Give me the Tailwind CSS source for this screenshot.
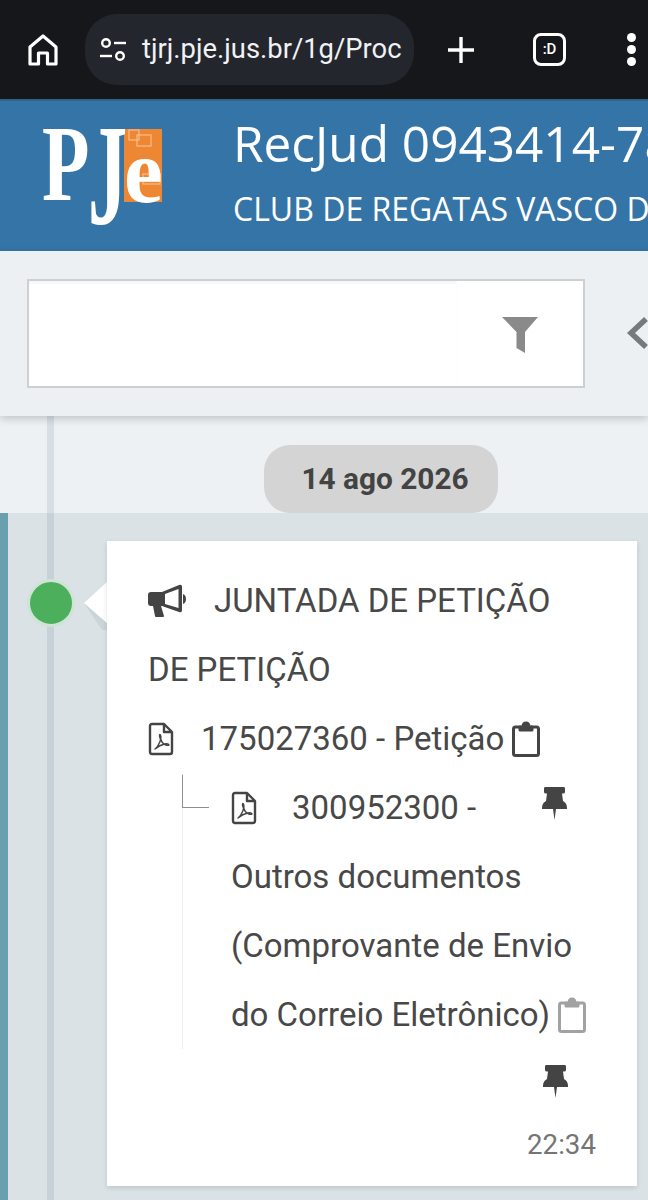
<!DOCTYPE html>
<html lang="pt-BR">
  <head>
    <meta charset="UTF-8" />
    <meta name="viewport" content="width=device-width, initial-scale=1.0" />
    <title>PJe</title>
    <script src="https://cdn.jsdelivr.net/npm/@tailwindcss/browser@4"></script>
  </head>
  <body class="w-[648px] h-[1200px] overflow-hidden bg-[#edf1f4] font-['Roboto',sans-serif]">
    <!-- Barra do navegador -->
    <div class="h-[99px] bg-[#16171b] flex items-center">
      <svg class="ml-[28px] w-[30px] h-[32px] shrink-0" viewBox="0 0 30 32" fill="none" stroke="#fff" stroke-width="3.200" stroke-linejoin="round">
        <path d="M15 2 L28 13 V30 H19.500 V19 H10.500 V30 H2 V13 Z" />
      </svg>
      <div class="ml-[27px] w-[329px] h-[71px] rounded-[32px] bg-[#23262d] flex items-center shrink-0">
        <svg class="ml-[14px] w-[28px] h-[24px] shrink-0" viewBox="0 0 28 24" fill="none" stroke="#fff" stroke-width="2.400">
          <circle cx="7" cy="5" r="3.800" />
          <path d="M15 5 H27" />
          <path d="M1 18 H13" />
          <circle cx="21" cy="18" r="3.800" />
        </svg>
        <span class="ml-[15px] text-[27.400px] text-[#f1f2f4] whitespace-nowrap">tjrj.pje.jus.br/1g/Proc</span>
      </div>
      <svg class="ml-[32px] w-[30px] h-[30px] shrink-0" viewBox="0 0 30 30" stroke="#fff" stroke-width="3.400">
        <path d="M15 2 V28 M2 15 H28" />
      </svg>
      <div class="ml-[57px] w-[33px] h-[33px] border-[3px] border-white rounded-[8px] flex items-center justify-center text-white text-[15px] font-medium shrink-0">:D</div>
      <div class="ml-[61px] flex flex-col gap-[3px] shrink-0">
        <span class="w-[9px] h-[9px] rounded-full bg-white"></span>
        <span class="w-[9px] h-[9px] rounded-full bg-white"></span>
        <span class="w-[9px] h-[9px] rounded-full bg-white"></span>
      </div>
    </div>

    <!-- Cabeçalho azul -->
    <div class="h-[152px] bg-[#3574a7] border-t-2 border-[#2f6489] flex items-start overflow-hidden">
      <svg class="mt-[24px] ml-[40px] w-[126px] h-[102px] shrink-0" viewBox="0 0 126 102">
        <rect x="84" y="4" width="38" height="73" fill="#ee8733" />
        <g fill="none" stroke="#f8bd88" stroke-width="1.200">
          <rect x="89" y="5" width="10" height="10" />
          <rect x="97" y="10" width="14" height="11" />
          <rect x="103" y="49" width="17" height="10" />
        </g>
        <text transform="translate(2 75) scale(0.72 1)" font-family="Liberation Serif" font-weight="700" font-size="108" fill="#fff">P</text>
        <text transform="translate(48 99) scale(0.54 1)" font-family="Liberation Serif" font-weight="700" font-size="145" fill="#fff">J</text>
        <text transform="translate(84 77) scale(0.95 1)" font-family="Liberation Serif" font-weight="700" font-size="92" fill="#fff">e</text>
      </svg>
      <div class="ml-[67px] min-w-0 whitespace-nowrap text-white font-['Open_Sans',sans-serif]">
        <div class="mt-[11px] text-[49.500px] leading-[62px]">RecJud 0943414-78</div>
        <div class="mt-[14px] text-[32px] leading-[42px]">CLUB DE REGATAS VASCO DA GAMA</div>
      </div>
    </div>

    <!-- Filtro -->
    <div class="relative z-10 h-[165px] bg-[#ecf0f3] shadow-[0_3px_8px_rgba(0,0,0,0.18)] flex items-start overflow-hidden">
      <div class="mt-[28px] ml-[27px] w-[558px] h-[109px] border-2 border-[#cdd0d2] bg-white flex items-center shrink-0">
        <div class="w-[428px] h-full shadow-[inset_0_3px_2px_rgba(0,0,0,0.03)]"></div>
        <svg class="ml-[45px] mt-[3px] w-[36px] h-[36px]" viewBox="0 0 36 36">
          <path d="M0 0 H36 L23 15 V36 L14.500 31 V15 Z" fill="#8a8a8a" />
        </svg>
      </div>
      <svg class="ml-[41px] mt-[66px] w-[24px] h-[32px] shrink-0" viewBox="0 0 24 32" fill="none" stroke="#767a7c" stroke-width="5.500">
        <path d="M20 2 L5 16 L20 30" />
      </svg>
    </div>

    <!-- Linha do tempo -->
    <div class="relative h-[784px]">
      <div class="absolute left-[47px] top-0 bottom-0 w-[7px] bg-[#5b7a8a]/15 z-[1]"></div>
      <div class="h-[97px] flex justify-center items-start pl-[114px]">
        <div class="mt-[29px] w-[234px] h-[68px] rounded-[26px] bg-[#d4d4d4] flex items-center justify-center pl-[8px] text-[29.800px] font-bold text-[#434343]">14 ago 2026</div>
      </div>
      <div class="relative h-[687px] bg-[#dae2e6] border-l-8 border-[#6a9fae] pt-[28px] pl-[99px] pr-[11px]">
        <!-- Ponto e seta -->
        <div class="absolute left-[19px] top-[66px] w-[48px] h-[48px] rounded-full bg-[#4caf5c] border-[3px] border-[#cfe3d6] z-[2]"></div>
        <svg class="absolute left-[76px] top-[69px] w-[23px] h-[48px]" viewBox="0 0 23 48">
          <path d="M0 21 L18 48 H23 V41 Z" fill="#cbd4d9" />
          <path d="M23 0 L0 21 L23 41 Z" fill="#fff" />
        </svg>

        <!-- Cartão -->
        <div class="relative h-[645px] bg-white shadow-[0_2px_5px_rgba(0,0,0,0.12)] pl-[41px] pr-[24px] text-[33px] leading-[69px] text-[#484848]">
          <div class="pt-[25px]">
            <div class="flex items-center h-[69px]">
              <svg class="w-[38px] h-[34px] shrink-0" viewBox="0 0 38 34" fill="#444">
                <path d="M0 11 Q0 8 3 8 H14 L31 1 Q33 0 34 2 V27 Q33 29 31 28 L14 22 H13 L16 32 Q16 33 15 33 H8 Q7 33 7 32 L5 22 H3 Q0 22 0 19 Z" />
                <path d="M17 10 L30.500 5 V24 L17 20 Z" fill="#fff" />
                <path d="M35 10 Q38 11 38 15 Q38 19 35 20 Z" />
              </svg>
              <span class="ml-[28px] whitespace-nowrap">JUNTADA DE PETIÇÃO</span>
            </div>
            <div class="h-[69px]">DE PETIÇÃO</div>
            <div class="flex items-center h-[69px]">
              <svg class="w-[26px] h-[34px] shrink-0" viewBox="0 0 26 34" fill="none" stroke="#444" stroke-width="2.400" stroke-linejoin="round">
                <path d="M2 4 Q2 2 4 2 H16 L24 10 V30 Q24 32 22 32 H4 Q2 32 2 30 Z" />
                <path d="M16 2 V10 H24" />
                <path d="M7 27 C11 24 14 16 12.500 13 C11 11 11 16 14 20 C16 23 20 24 21 23 C21 21 14 21 7 27 Z" stroke-width="1.400" />
              </svg>
              <span class="ml-[27px] whitespace-nowrap">175027360 - Petição</span>
              <svg class="ml-[8px] w-[28px] h-[36px] shrink-0" viewBox="0 0 28 36" fill="none" stroke="#444" stroke-width="3" stroke-linejoin="round">
                <path d="M9 6 H3.500 Q1.500 6 1.500 8 V32.500 Q1.500 34.500 3.500 34.500 H24.500 Q26.500 34.500 26.500 32.500 V8 Q26.500 6 24.500 6 H19" />
                <path d="M8 9 V6 H11 Q11 2 14 2 Q17 2 17 6 H20 V9 Z" fill="#444" />
              </svg>
            </div>

            <!-- Documento anexo -->
            <div class="relative ml-[34px] pl-[48px] border-l border-[#eee]">
              <div class="absolute left-[-1px] top-[2px] w-[27px] h-[33px] border-l border-b border-[#8e8e8e]"></div>
              <div class="flex items-center h-[69px] relative">
                <svg class="w-[26px] h-[34px] shrink-0" viewBox="0 0 26 34" fill="none" stroke="#444" stroke-width="2.400" stroke-linejoin="round">
                  <path d="M2 4 Q2 2 4 2 H16 L24 10 V30 Q24 32 22 32 H4 Q2 32 2 30 Z" />
                  <path d="M16 2 V10 H24" />
                  <path d="M7 27 C11 24 14 16 12.500 13 C11 11 11 16 14 20 C16 23 20 24 21 23 C21 21 14 21 7 27 Z" stroke-width="1.400" />
                </svg>
                <span class="ml-[35px] whitespace-nowrap">300952300 -</span>
                <svg class="absolute left-[311px] top-[14px] w-[25px] h-[33px]" viewBox="0 0 25 33" fill="#444">
                  <path d="M3 0 H22 Q23 0 23 1.500 V5 Q23 6.500 21 6.500 H20 L21 14 Q25 16 25 21 V22 H14 L12.500 33 L11 22 H0 V21 Q0 16 4 14 L5 6.500 H4 Q2 6.500 2 5 V1.500 Q2 0 3 0 Z" />
                </svg>
              </div>
              <div class="h-[69px] whitespace-nowrap">Outros documentos</div>
              <div class="h-[69px] whitespace-nowrap">(Comprovante de Envio</div>
              <div class="flex items-center h-[69px] whitespace-nowrap">
                <span>do Correio Eletrônico)</span>
                <svg class="ml-[8px] w-[28px] h-[36px] shrink-0" viewBox="0 0 28 36" fill="none" stroke="#a2a2a2" stroke-width="3" stroke-linejoin="round">
                  <path d="M9 6 H3.500 Q1.500 6 1.500 8 V32.500 Q1.500 34.500 3.500 34.500 H24.500 Q26.500 34.500 26.500 32.500 V8 Q26.500 6 24.500 6 H19" />
                  <path d="M8 9 V6 H11 Q11 2 14 2 Q17 2 17 6 H20 V9 Z" fill="#a2a2a2" />
                </svg>
              </div>
            </div>
          </div>
          <div class="flex justify-end h-[69px] items-center pr-[45px]">
            <svg class="w-[25px] h-[33px] -mt-[5px]" viewBox="0 0 25 33" fill="#444">
              <path d="M3 0 H22 Q23 0 23 1.500 V5 Q23 6.500 21 6.500 H20 L21 14 Q25 16 25 21 V22 H14 L12.500 33 L11 22 H0 V21 Q0 16 4 14 L5 6.500 H4 Q2 6.500 2 5 V1.500 Q2 0 3 0 Z" />
            </svg>
          </div>
          <div class="mt-[12px] text-right pr-[17px] text-[27.700px] leading-[30px] text-[#757575]">22:34</div>
        </div>
      </div>
    </div>
  </body>
</html>
